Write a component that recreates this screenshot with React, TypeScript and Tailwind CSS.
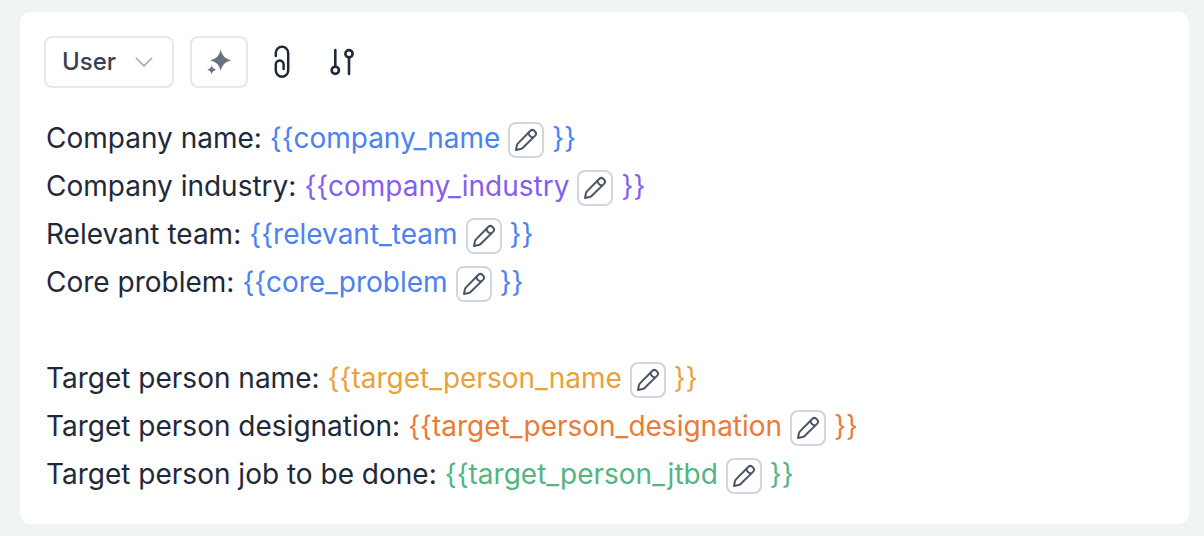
type Variable = { label: string; name: string; color: string };

const company: Variable[] = [
  { label: "Company name:", name: "company_name", color: "text-[#4c82f0]" },
  { label: "Company industry:", name: "company_industry", color: "text-[#845ef0]" },
  { label: "Relevant team:", name: "relevant_team", color: "text-[#4c82f0]" },
  { label: "Core problem:", name: "core_problem", color: "text-[#4c82f0]" },
];

const person: Variable[] = [
  { label: "Target person name:", name: "target_person_name", color: "text-[#e9a23b]" },
  { label: "Target person designation:", name: "target_person_designation", color: "text-[#e97c36]" },
  { label: "Target person job to be done:", name: "target_person_jtbd", color: "text-[#52b583]" },
];

function PencilIcon() {
  return (
    <svg className="size-6 shrink-0" viewBox="0 0 24 24" fill="none" stroke="currentColor" strokeWidth="2" strokeLinecap="round" strokeLinejoin="round" aria-hidden="true">
      <path d="M2 22l.9-4.600c.2-.8.5-1.400 1.100-2L16.400 2.800a2.900 2.900 0 0 1 3.900 0l.9.9a2.900 2.900 0 0 1 0 3.900L8.600 20c-.6.6-1.200.9-2 1.100z" />
      <path d="M14.400 4.900c.5 2.700 2 4.200 4.700 4.700" />
    </svg>
  );
}

function SparklesIcon() {
  return (
    <svg className="size-7" viewBox="0 0 28 28" fill="currentColor" aria-hidden="true">
      <path d="M15.700 1.500c1.500 6.300 4.500 9.300 10.800 10.800c-6.300 1.500-9.300 4.500-10.800 10.800c-1.500-6.300-4.500-9.300-10.800-10.800c6.300-1.500 9.300-4.500 10.800-10.800z" />
      <path d="M6.700 17.200c.7 2.600 1.900 3.800 4.500 4.500c-2.600.7-3.800 1.900-4.500 4.500c-.7-2.600-1.900-3.800-4.500-4.500c2.600-.7 3.800-1.900 4.500-4.500z" />
    </svg>
  );
}

function PaperclipIcon() {
  return (
    <svg className="h-[34px] w-5" viewBox="0 0 20 34" fill="none" stroke="currentColor" strokeWidth="2.500" strokeLinecap="round" aria-hidden="true">
      <path d="M3.800 11V8a6.200 6.200 0 0 1 12.400 0v17.600a6.200 6.200 0 0 1-12.400 0V19.500a3.900 3.900 0 0 1 7.800 0V24" />
    </svg>
  );
}

function ParametersIcon() {
  return (
    <svg className="h-[30px] w-7" viewBox="0 0 28 30" fill="none" stroke="currentColor" strokeWidth="2.600" strokeLinecap="round" aria-hidden="true">
      <path d="M7.300 3v16M21 11v16" />
      <circle cx="7.300" cy="23.300" r="3.600" />
      <circle cx="21" cy="6.700" r="3.600" />
    </svg>
  );
}

function Line({ label, name, color }: Variable) {
  return (
    <p className="flex min-h-12 flex-wrap items-center gap-x-2">
      <span>{label}</span>
      <span className={color}>{"{{" + name}</span>
      <button type="button" aria-label={"Edit " + name} className="mt-1 flex size-9 items-center justify-center rounded-lg border-2 border-gray-300 bg-white text-gray-600">
        <PencilIcon />
      </button>
      <span className={color}>{"}}"}</span>
    </p>
  );
}

export default function App() {
  return (
    <main className="min-h-screen bg-[#f0f4f5] py-3 pr-[15px] pl-5 font-['Inter',sans-serif]">
      <section className="rounded-[10px] bg-white px-6 pt-6 pb-[26px] text-gray-800">
        <div className="flex items-center">
          <div className="grid items-center">
            <select aria-label="Role" defaultValue="User" className="col-start-1 row-start-1 h-[52px] w-[130px] appearance-none rounded-lg border-2 border-gray-200 bg-white pl-4 text-2xl font-medium text-gray-700">
              <option>User</option>
            </select>
            <svg className="pointer-events-none col-start-1 row-start-1 mr-5 h-3 w-5 justify-self-end" viewBox="0 0 20 12" fill="none" stroke="#a3a3a3" strokeWidth="1.500" strokeLinecap="round" strokeLinejoin="round" aria-hidden="true">
              <path d="M2.300 2.300l7.700 7.700 7.700-7.700" />
            </svg>
          </div>
          <button type="button" aria-label="Improve" className="ml-4 flex h-[52px] w-[58px] items-center justify-center rounded-lg border-2 border-gray-200 text-gray-500">
            <SparklesIcon />
          </button>
          <button type="button" aria-label="Attach file" className="ml-6">
            <PaperclipIcon />
          </button>
          <button type="button" aria-label="Parameters" className="ml-9">
            <ParametersIcon />
          </button>
        </div>
        <div className="mt-[26px] flex flex-col gap-12 pl-0.5 text-[28px] leading-[48px]">
          <div>{company.map((v) => <Line key={v.name} {...v} />)}</div>
          <div>{person.map((v) => <Line key={v.name} {...v} />)}</div>
        </div>
      </section>
    </main>
  );
}
